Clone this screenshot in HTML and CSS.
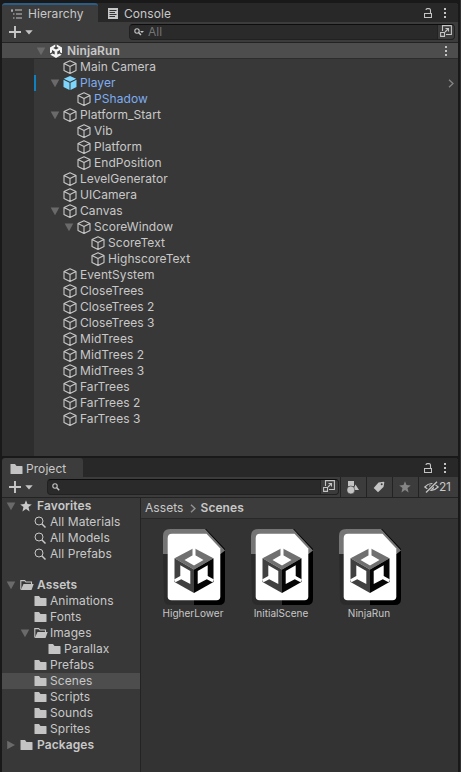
FILE: index.html
```html
<!DOCTYPE html>
<html lang="en">
<head>
<meta charset="utf-8">
<title>Hierarchy</title>
<link rel="stylesheet" href="styles.css">
</head>
<body>
<svg class="defs" width="0" height="0">
  <symbol id="cube" viewBox="0 0 14 14"><path d="M7 .7 13 3.4V10.5L7 13.4 1 10.5V3.4ZM1 3.4 7 6.5 13 3.4M7 6.5V13.4" fill="none" stroke="currentColor" stroke-width="1.1" stroke-linejoin="round"/></symbol>
  <symbol id="prefab" viewBox="0 0 14 14"><path d="M7 0 13.2 2.8 7 5.8.8 2.8ZM.5 3.8 6.5 6.7V14L.5 11ZM13.5 3.8 7.5 6.7V14L13.5 11Z" fill="#7fd6fd"/></symbol>
  <symbol id="unity" viewBox="0 0 14 14"><path d="M7 0 13 3.400V10.600L7 14 1 10.600V3.400Z" fill="#f4f4f4"/><path d="M6.300 0H7.700V2.700L9.700 3.900 7 5.400 4.300 3.900 6.300 2.700ZM3 6 5.700 7.600V10.600L3.400 9.400 1 10.900.3 9.700 3 8.200ZM11 6 8.300 7.600V10.600L10.600 9.400 13 10.900 13.700 9.700 11 8.200Z" fill="#444"/></symbol>
  <symbol id="down" viewBox="0 0 10 10"><path d="M.7 1.5H9.3L5 9.3Z" fill="#6a6a6a"/></symbol>
  <symbol id="right" viewBox="0 0 10 10"><path d="M1.2.7V9.3L9 5Z" fill="#6a6a6a"/></symbol>
  <symbol id="folder" viewBox="0 0 13 12"><path d="M.5 1H5L6.5 3H12Q12.5 3 12.5 3.5V10.5Q12.5 11 12 11H1Q.5 11 .5 10.5Z" fill="#c4c4c4"/></symbol>
  <symbol id="open" viewBox="0 0 14 12"><path d="M.8 10.5V1.6H4.7L6 3H11.5V5" fill="none" stroke="#c4c4c4" stroke-width="1.1"/><path d="M3.5 5H13.7L11.5 11H.8Z" fill="#c4c4c4"/></symbol>
  <symbol id="star" viewBox="0 0 12 12"><path d="M6 .2 7.5 4.1 11.8 4.4 8.5 7.1 9.6 11.4 6 9 2.4 11.4 3.5 7.1.2 4.4 4.5 4.1Z" fill="currentColor"/></symbol>
  <symbol id="lens" viewBox="0 0 12 12"><circle cx="4.500" cy="5" r="4" fill="none" stroke="currentColor"/><path d="M7.500 8 11 11.5" stroke="currentColor" stroke-width="1.5"/></symbol>
  <symbol id="plus" viewBox="0 0 12 12"><path d="M6 0V12M0 6H12" stroke="#c8c8c8" stroke-width="1.9"/></symbol>
  <symbol id="drop" viewBox="0 0 8 5"><path d="M.3.3H7.7L4 4.5Z" fill="#c4c4c4"/></symbol>
  <symbol id="lock" viewBox="0 0 8 10"><path d="M.5 5.5H7.5V9.5H.5ZM6.5 5V2.3Q6.500 .6 5 .6H3.3Q2 .6 2 2" fill="none" stroke="#c4c4c4" stroke-width="1.1"/></symbol>
  <symbol id="dots" viewBox="0 0 2 10"><path d="M0 0H2V2H0ZM0 4H2V6H0ZM0 8H2V10H0Z" fill="#c4c4c4"/></symbol>
  <symbol id="popout" viewBox="0 0 12 12"><path d="M2.500 6V.6H11.400V9.500H6M.6 7.5H4.500V11.400H.6ZM5 7 8.500 3.500M5.500 3.500H8.500V6.500" fill="none" stroke="#c4c4c4" stroke-width="1.1"/></symbol>
  <symbol id="scene" viewBox="0 0 62 76">
    <path d="M6 0H43L62 20V70Q62 76 56 76H31L29 40Z" fill="#000"/>
    <path d="M0 20H31V76H7Q1 76 1 70Z" fill="#2b2b2b"/>
    <path d="M0 25V7Q0 0 7 0H42L62 21.500 57.500 25Z" fill="#757575"/>
    <path d="M9 4.700H43.500L57.300 19.500V67.500Q57.300 71.300 53.500 71.300H8.500Q4.700 71.300 4.700 67.500V9Q4.700 4.700 9 4.700Z" fill="#fff"/>
    <path d="M31 19 50.500 29.300 31 40.500 11.500 29.300Z" fill="#707070"/>
    <path d="M11.500 29.300 31 40.500V64L11.500 53Z" fill="#404040"/>
    <path d="M50.500 29.300 31 40.500V64L50.500 53Z" fill="#050505"/>
    <path d="M31 25.500 40.500 31 31 36.500 21.500 31ZM29.500 18H32.500V28H29.500ZM17.300 36.200 27.300 42V55L18.200 50.300 12.500 53.300 11 50.500 17.300 47ZM44.700 36.200 34.700 42V55L43.800 50.300 49.500 53.300 51 50.500 44.700 47Z" fill="#fff"/>
  </symbol>
</svg>
<div class="window">
  <section class="panel hierarchy">
    <header class="tabs">
      <div class="tab active"><svg class="i-list" viewBox="0 0 11 10"><path d="M4 1H11M5 5H11M5 9H11M0 1H2M2 5H3.500M2 9H3.500M1 1V3" stroke="#c4c4c4" stroke-width="1.2" fill="none"/></svg><span>Hierarchy</span></div>
      <div class="tab"><svg class="i-console" viewBox="0 0 10 11"><path d="M0 0H10V11H0Z" fill="#c8c8c8"/><path d="M1.500 2.500H8.500M1.500 4.500H7M1.500 6.500H8.500M1.500 8.500H7" stroke="#333"/></svg><span>Console</span></div>
      <div class="tools"><svg class="i-lock"><use href="#lock"/></svg><svg class="i-dots"><use href="#dots"/></svg></div>
    </header>
    <div class="toolbar">
      <svg class="i12"><use href="#plus"/></svg><svg class="i-drop"><use href="#drop"/></svg>
      <div class="search"><svg class="i-find" viewBox="0 0 10 8"><circle cx="3" cy="3" r="2.200" fill="none" stroke="#c4c4c4" stroke-width="1.100"/><path d="M4.800 4.800 7 7" stroke="#c4c4c4" stroke-width="1.500"/><path d="M6 3H10L8 5Z" fill="#c4c4c4"/></svg><span>All</span><div class="pop"><svg class="i12"><use href="#popout"/></svg></div></div>
    </div>
    <div class="row scene-row"><svg class="arrow"><use href="#down"/></svg><svg class="i14"><use href="#unity"/></svg><b>NinjaRun</b><svg class="i-dots row-menu"><use href="#dots"/></svg></div>
    <div class="list">
      <div class="gutter"></div>
      <div class="tree">
        <div class="row l1"><svg class="i14"><use href="#cube"/></svg>Main Camera</div>
        <div class="row l1 open changed blue"><svg class="arrow"><use href="#down"/></svg><svg class="i14"><use href="#prefab"/></svg>Player<svg class="chev" viewBox="0 0 6 9"><path d="M1 .7 5 4.500 1 8.300" fill="none" stroke="#858585" stroke-width="1.300"/></svg></div>
        <div class="row l2 blue"><svg class="i14"><use href="#cube"/></svg>PShadow</div>
        <div class="row l1 open"><svg class="arrow"><use href="#down"/></svg><svg class="i14"><use href="#cube"/></svg>Platform_Start</div>
        <div class="row l2"><svg class="i14"><use href="#cube"/></svg>Vib</div>
        <div class="row l2"><svg class="i14"><use href="#cube"/></svg>Platform</div>
        <div class="row l2"><svg class="i14"><use href="#cube"/></svg>EndPosition</div>
        <div class="row l1"><svg class="i14"><use href="#cube"/></svg>LevelGenerator</div>
        <div class="row l1"><svg class="i14"><use href="#cube"/></svg>UICamera</div>
        <div class="row l1 open"><svg class="arrow"><use href="#down"/></svg><svg class="i14"><use href="#cube"/></svg>Canvas</div>
        <div class="row l2 open"><svg class="arrow"><use href="#down"/></svg><svg class="i14"><use href="#cube"/></svg>ScoreWindow</div>
        <div class="row l3"><svg class="i14"><use href="#cube"/></svg>ScoreText</div>
        <div class="row l3"><svg class="i14"><use href="#cube"/></svg>HighscoreText</div>
        <div class="row l1"><svg class="i14"><use href="#cube"/></svg>EventSystem</div>
        <div class="row l1"><svg class="i14"><use href="#cube"/></svg>CloseTrees</div>
        <div class="row l1"><svg class="i14"><use href="#cube"/></svg>CloseTrees 2</div>
        <div class="row l1"><svg class="i14"><use href="#cube"/></svg>CloseTrees 3</div>
        <div class="row l1"><svg class="i14"><use href="#cube"/></svg>MidTrees</div>
        <div class="row l1"><svg class="i14"><use href="#cube"/></svg>MidTrees 2</div>
        <div class="row l1"><svg class="i14"><use href="#cube"/></svg>MidTrees 3</div>
        <div class="row l1"><svg class="i14"><use href="#cube"/></svg>FarTrees</div>
        <div class="row l1"><svg class="i14"><use href="#cube"/></svg>FarTrees 2</div>
        <div class="row l1"><svg class="i14"><use href="#cube"/></svg>FarTrees 3</div>
      </div>
    </div>
  </section>
  <section class="panel project">
    <header class="tabs">
      <div class="tab active"><svg class="i-folder"><use href="#folder"/></svg><span>Project</span></div>
      <div class="tools"><svg class="i-lock"><use href="#lock"/></svg><svg class="i-dots"><use href="#dots"/></svg></div>
    </header>
    <div class="toolbar">
      <svg class="i12"><use href="#plus"/></svg><svg class="i-drop"><use href="#drop"/></svg>
      <div class="search"><svg class="i-find" viewBox="0 0 10 8"><circle cx="3" cy="3" r="2.200" fill="none" stroke="#c4c4c4" stroke-width="1.100"/><path d="M4.800 4.800 7.200 7.200" stroke="#c4c4c4" stroke-width="1.500"/></svg><div class="pop"><svg class="i12"><use href="#popout"/></svg></div></div>
      <div class="tbtn"><svg class="i-shapes" viewBox="0 0 12 13"><path d="M1 0H7V5H1ZM8.500 3.500 12 9H6Z" fill="#c4c4c4"/><circle cx="3.800" cy="9" r="4" fill="#c4c4c4" stroke="#3c3c3c" stroke-width=".6"/></svg></div>
      <div class="tbtn"><svg class="i-tag" viewBox="0 0 12 12"><path d="M5.500 1.500 10.500.7Q11.300.7 11.300 1.500L10.500 6 5 11.300.7 7Z" fill="#c4c4c4"/><circle cx="8.700" cy="3.300" r="1" fill="#3c3c3c"/></svg></div>
      <div class="tbtn dim"><svg class="i12"><use href="#star"/></svg></div>
      <div class="tbtn hidden-count"><svg class="i-eye" viewBox="0 0 15 12"><path d="M.8 6Q7.500-1 14.200 6 7.500 12.500.8 6Z" fill="none" stroke="#c4c4c4" stroke-width="1.200"/><circle cx="7.500" cy="6" r="2.500" fill="#c4c4c4"/><path d="M1.500 11.500 12.500.7" stroke="#3c3c3c" stroke-width="3"/><path d="M2 11.500 13 .7" stroke="#c4c4c4" stroke-width="1.300"/></svg><span>21</span></div>
    </div>
    <div class="content">
      <nav class="side">
        <div class="row p0 open"><svg class="arrow"><use href="#down"/></svg><svg class="i-star"><use href="#star"/></svg><b>Favorites</b></div>
        <div class="row p1"><svg class="i-folder"><use href="#lens"/></svg>All Materials</div>
        <div class="row p1"><svg class="i-folder"><use href="#lens"/></svg>All Models</div>
        <div class="row p1"><svg class="i-folder"><use href="#lens"/></svg>All Prefabs</div>
        <div class="row p0 open group"><svg class="arrow"><use href="#down"/></svg><svg class="i-open"><use href="#open"/></svg><b>Assets</b></div>
        <div class="row p1"><svg class="i-folder"><use href="#folder"/></svg>Animations</div>
        <div class="row p1"><svg class="i-folder"><use href="#folder"/></svg>Fonts</div>
        <div class="row p1 open"><svg class="arrow"><use href="#down"/></svg><svg class="i-open"><use href="#open"/></svg>Images</div>
        <div class="row p2"><svg class="i-folder"><use href="#folder"/></svg>Parallax</div>
        <div class="row p1"><svg class="i-folder"><use href="#folder"/></svg>Prefabs</div>
        <div class="row p1 selected"><svg class="i-folder"><use href="#folder"/></svg>Scenes</div>
        <div class="row p1"><svg class="i-folder"><use href="#folder"/></svg>Scripts</div>
        <div class="row p1"><svg class="i-folder"><use href="#folder"/></svg>Sounds</div>
        <div class="row p1"><svg class="i-folder"><use href="#folder"/></svg>Sprites</div>
        <div class="row p0 open"><svg class="arrow"><use href="#right"/></svg><svg class="i-folder"><use href="#folder"/></svg><b>Packages</b></div>
      </nav>
      <main class="assets">
        <div class="crumbs"><span>Assets</span><svg class="crumb-sep" viewBox="0 0 6 9"><path d="M1 .7 5 4.500 1 8.300" fill="none" stroke="#909090" stroke-width="1.500"/></svg><b>Scenes</b></div>
        <div class="grid">
          <figure><svg class="i-scene"><use href="#scene"/></svg><figcaption>HigherLower</figcaption></figure>
          <figure><svg class="i-scene"><use href="#scene"/></svg><figcaption>InitialScene</figcaption></figure>
          <figure><svg class="i-scene"><use href="#scene"/></svg><figcaption>NinjaRun</figcaption></figure>
        </div>
      </main>
    </div>
  </section>
</div>
</body>
</html>
```
FILE: styles.css
```css
* { box-sizing: border-box; }
body { margin: 0; background: #191919; color: #c8c8c8; font: 12px/16px Inter, "Liberation Sans", sans-serif; letter-spacing: .07px; }
svg { display: block; flex: none; }
.defs { position: absolute; }
b { font-weight: 600; }
.window { height: 772px; width: 461px; padding: 3px 3px 0 2px; display: flex; flex-direction: column; gap: 2px; overflow: hidden; box-shadow: inset -1px 0 #303030; }
.panel { display: flex; flex-direction: column; background: #383838; border-radius: 3px 3px 0 0; overflow: hidden; }
.hierarchy { height: 453px; }
.project { flex: 1; }

.tabs { display: flex; height: 19px; background: #282828; }
.tab { display: flex; align-items: center; padding: 2px 12px 0 10px; height: 19px; }
.tab span { margin-left: 5px; }
.tab:not(.active) span { margin-left: 6px; }
.tab.active { background: #3c3c3c; border-radius: 3px 3px 0 0; }
.hierarchy .tab.active { width: 96px; border-top: 2px solid #2c5d87; padding: 0 0 0 9px; }
.hierarchy .tab.active span { margin-left: 4px; }
.project .tab.active { width: 81px; padding-left: 8px; }
.project .tab.active span { margin-left: 3px; }
.tools { margin-left: auto; display: flex; align-items: center; gap: 12px; padding: 0 12px 0 0; }

.toolbar { display: flex; align-items: center; height: 21px; padding: 0 3px 0 7px; background: #3c3c3c; border-bottom: 1px solid #232323; }
.project .toolbar { padding-right: 0; }
.i-drop { width: 8px; height: 5px; margin-left: 4px; }
.search { display: flex; align-items: center; flex: 1; height: 16px; margin-left: 96px; padding-left: 4px; background: #2a2a2a; border: 1px solid #212121; border-top-color: #0d0d0d; border-radius: 4px; color: #747474; overflow: hidden; }
.search span { margin-left: 4px; }
.project .search { flex: 0 0 292px; margin-left: 14px; }
.pop { margin-left: auto; width: 17px; height: 16px; background: #3c3c3c; border-left: 1px solid #232323; padding: 1px 0 0 2px; }
.project .pop { width: 18px; }
.tbtn { flex: none; width: 26px; height: 20px; display: flex; align-items: center; justify-content: center; border-left: 1px solid #232323; padding-right: 2px; }
.search + .tbtn { margin-left: 1px; }
.dim { color: #858585; }
.hidden-count { flex: 1; justify-content: flex-start; padding-left: 5px; letter-spacing: -.4px; }

.row { display: flex; align-items: center; height: 16px; white-space: nowrap; }
.row b { letter-spacing: .1px; }
.row .arrow { margin-right: 3px; }
.row .i14 { margin-right: 3px; }
.row .i-folder, .row .i-open, .i-star { margin-right: 4px; }
.row .i-open { margin-right: 3px; }
.scene-row { padding: 0 11px 0 34px; background: #4d4d4d; border-bottom: 1px solid #2c2c2c; }
.scene-row .i14 { margin-right: 4px; }
.row-menu { margin-left: auto; }
.list { display: flex; flex: 1; }
.gutter { width: 32px; background: #2d2d2d; }
.tree { flex: 1; }
.l1 { padding-left: 29px; }
.l2 { padding-left: 43px; }
.l3 { padding-left: 57px; }
.l1.open { padding-left: 16px; }
.l2.open { padding-left: 30px; }
.l1.open .arrow, .l2.open .arrow { margin-right: 3px; }
.changed { box-shadow: inset 2px 0 #0f81be; }
.blue { color: #7fadf0; }
.blue use[href="#cube"] { color: #c8c8c8; }
.chev { width: 6px; height: 9px; margin-left: auto; margin-right: 4px; }

.content { display: flex; flex: 1; }
.side { width: 139px; border-right: 1px solid #232323; }
.p0.open { padding-left: 4px; }
.p0 .arrow { margin-right: 4px; }
.p0 .i-star { margin-right: 5px; }
.p1 { padding-left: 32px; }
.p1 .i-folder, .p2 .i-folder { margin-right: 3px; }
.p1.open { padding-left: 18px; }
.p1.open .arrow { margin-right: 4px; }
.p1.open .i-open { margin-right: 2px; }
.p2 { padding-left: 46px; }
.group { margin-top: 15px; }
.selected { background: #4d4d4d; }
.assets { flex: 1; background: #333; }
.crumbs { display: flex; align-items: center; height: 21px; padding-left: 4px; background: #3c3c3c; border-bottom: 1px solid #282828; }
.crumb-sep { width: 6px; height: 9px; margin: 0 5px 0 6px; }
.grid { display: flex; padding: 10px 0 0 9px; }
figure { margin: 0; width: 88px; display: flex; flex-direction: column; align-items: center; font-size: 10px; line-height: 16px; }
figcaption { margin-left: -2px; letter-spacing: .02px; }

.hierarchy .tab.active .i-list { margin-right: 2px; }
.i12 { width: 12px; height: 12px; }
.i-star { width: 12px; height: 12px; }
.i14 { width: 14px; height: 14px; }
.arrow { width: 10px; height: 10px; }
.i-folder { width: 13px; height: 12px; }
.i-open { width: 14px; height: 12px; }
.i-lock { width: 8px; height: 10px; }
.i-dots { width: 2px; height: 10px; }
.i-list { width: 11px; height: 10px; }
.i-console { width: 10px; height: 11px; }
.i-find { width: 10px; height: 8px; }
.i-shapes { width: 12px; height: 13px; }
.i-tag { width: 12px; height: 12px; }
.i-eye { width: 15px; height: 12px; }
.i-scene { width: 62px; height: 76px; }
```
